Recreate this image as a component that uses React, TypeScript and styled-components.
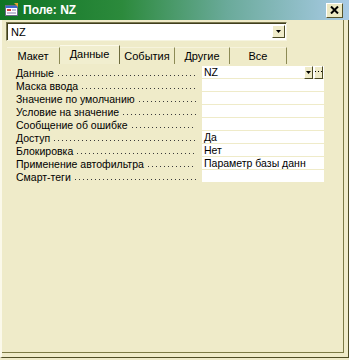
import React from 'react';
import styled, { createGlobalStyle } from 'styled-components';

const GlobalStyle = createGlobalStyle`
  html, body {
    margin: 0;
    padding: 0;
    background: #efebc9;
  }
  body {
    font-family: "Liberation Sans", Tahoma, sans-serif;
    font-size: 11px;
    color: #000;
  }
`;

const Window = styled.div`
  width: 349px;
  height: 358px;
  box-sizing: border-box;
  background: #efebc9;
  border-left: 2px solid #fbf9ea;
  border-right: 1px solid #4f4d25;
  border-bottom: 1px solid #4f4d25;
  box-shadow: inset -4px -4px 0 #efebc9, inset -5px -5px 0 #7c7a45;
  display: flex;
  flex-direction: column;
`;

const TitleBar = styled.div`
  height: 20px;
  margin-left: -2px;
  margin-right: -1px;
  display: flex;
  align-items: center;
  padding: 0 6px 0 5px;
  background: linear-gradient(90deg, #0f7424 0%, #2c8a3c 35%, #6aaa9a 65%, #a9cbe6 100%);
`;

const TitleText = styled.span`
  flex: 1;
  margin-left: 4px;
  color: #fff;
  font-weight: bold;
  font-size: 12px;
`;

const CloseButton = styled.div`
  width: 15px;
  height: 13px;
  background: #ece9c4;
  border: 1px solid #fff;
  border-right-color: #55532b;
  border-bottom-color: #55532b;
  display: flex;
  align-items: center;
  justify-content: center;
`;

const Body = styled.div`
  flex: 1;
  padding: 2px 0 0 4px;
  display: flex;
  flex-direction: column;
`;

const Combo = styled.div`
  width: 281px;
  height: 19px;
  box-sizing: border-box;
  background: #fff;
  border: 1px solid #7a7850;
  border-right-color: #f6f4e0;
  border-bottom-color: #f6f4e0;
  box-shadow: inset 1px 1px 0 #403e1c;
  display: flex;
  align-items: center;
  padding-left: 4px;
`;

const ComboText = styled.span`
  flex: 1;
`;

const SmallButton = styled.div<{ $w?: number }>`
  width: ${p => p.$w ?? 13}px;
  height: 13px;
  margin-right: 1px;
  box-sizing: border-box;
  background: #efebc9;
  border: 1px solid #fff;
  border-right-color: #4d4b25;
  border-bottom-color: #4d4b25;
  display: flex;
  align-items: center;
  justify-content: center;
`;

const Tabs = styled.div`
  display: flex;
  margin-top: 4px;
  height: 19px;
  align-items: flex-end;
  padding-left: 1px;
`;

const Tab = styled.div<{ $w: number; $active?: boolean }>`
  width: ${p => p.$w}px;
  height: ${p => (p.$active ? 19 : 17)}px;
  box-sizing: border-box;
  display: flex;
  align-items: center;
  justify-content: center;
  padding-bottom: ${p => (p.$active ? 2 : 0)}px;
  border-right: 1px solid ${p => (p.$active ? '#6d6b3c' : '#8c8a55')};
  border-top: 1px solid ${p => (p.$active ? '#fbf9e8' : '#f6f3dc')};
  background: ${p => (p.$active ? '#f1eecf' : '#efebc9')};
`;

const Grid = styled.div`
  margin-top: 2px;
  width: 318px;
  display: flex;
  flex-direction: column;
  font-size: 10.5px;
`;

const Row = styled.div`
  display: flex;
  height: 13px;
  align-items: stretch;
`;

const Label = styled.div`
  width: 196px;
  box-sizing: border-box;
  display: flex;
  align-items: center;
  padding: 0 6px 0 10px;
  white-space: nowrap;
`;

const Dots = styled.span`
  flex: 1;
  height: 1px;
  align-self: flex-end;
  margin: 0 0 3px 4px;
  background-image: linear-gradient(90deg, #3a3a3a 1px, transparent 1px);
  background-size: 4px 1px;
  background-repeat: repeat-x;
`;

const Value = styled.div`
  flex: 1;
  background: #fff;
  margin-bottom: 1px;
  display: flex;
  align-items: center;
  padding-left: 2px;
  white-space: nowrap;
`;

const ValueText = styled.span`
  flex: 1;
`;

const rows: [string, string][] = [
  ['Данные', 'NZ'],
  ['Маска ввода', ''],
  ['Значение по умолчанию', ''],
  ['Условие на значение', ''],
  ['Сообщение об ошибке', ''],
  ['Доступ', 'Да'],
  ['Блокировка', 'Нет'],
  ['Применение автофильтра', 'Параметр базы данн'],
  ['Смарт-теги', ''],
];

const tabs: [string, number][] = [
  ['Макет', 53],
  ['Данные', 60],
  ['События', 55],
  ['Другие', 55],
  ['Все', 57],
];

const FormIcon = () => (
  <svg width="14" height="14" viewBox="0 0 14 14">
    <rect x="0.5" y="2.5" width="12" height="10" fill="#fff" stroke="#6a6a8a" />
    <rect x="1" y="3" width="11" height="2" fill="#3a6ad0" />
    <rect x="2" y="6" width="4" height="2" fill="#d04040" />
    <rect x="7" y="6" width="4" height="2" fill="#c0c0d8" />
    <rect x="2" y="9" width="9" height="2" fill="#c0c0d8" />
    <path d="M9 0 L13 0 L13 4 Z" fill="#e0a030" />
  </svg>
);

const Arrow = () => (
  <svg width="5" height="3" viewBox="0 0 5 3">
    <path d="M0 0 L5 0 L2.5 3 Z" fill="#000" />
  </svg>
);

const Ellipsis = () => (
  <svg width="7" height="2" viewBox="0 0 7 2">
    <rect x="0" y="0" width="1" height="1" fill="#000" />
    <rect x="3" y="0" width="1" height="1" fill="#000" />
    <rect x="6" y="0" width="1" height="1" fill="#000" />
  </svg>
);

const App = () => (
  <>
    <GlobalStyle />
    <Window>
      <TitleBar>
        <FormIcon />
        <TitleText>Поле: NZ</TitleText>
        <CloseButton>
          <svg width="9" height="8" viewBox="0 0 9 8">
            <path d="M1 0.5 L8 7.5 M8 0.5 L1 7.5" stroke="#000" strokeWidth="2" />
          </svg>
        </CloseButton>
      </TitleBar>
      <Body>
        <Combo>
          <ComboText>NZ</ComboText>
          <SmallButton>
            <Arrow />
          </SmallButton>
        </Combo>
        <Tabs>
          {tabs.map(([t, w]) => (
            <Tab key={t} $w={w} $active={t === 'Данные'}>
              {t}
            </Tab>
          ))}
        </Tabs>
        <Grid>
          {rows.map(([label, value], i) => (
            <Row key={label}>
              <Label>
                {label}
                <Dots />
              </Label>
              <Value>
                <ValueText>{value}</ValueText>
                {i === 0 && (
                  <>
                    <SmallButton $w={9}>
                      <Arrow />
                    </SmallButton>
                    <SmallButton $w={9}>
                      <Ellipsis />
                    </SmallButton>
                  </>
                )}
              </Value>
            </Row>
          ))}
        </Grid>
      </Body>
    </Window>
  </>
);

export default App;
